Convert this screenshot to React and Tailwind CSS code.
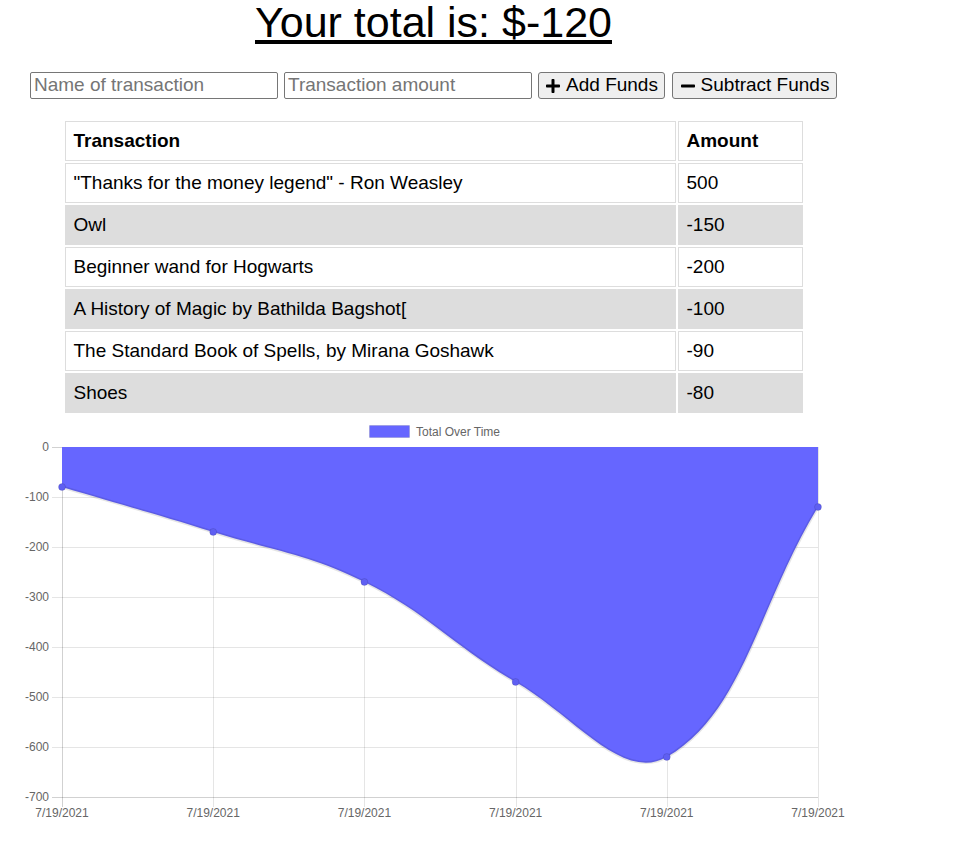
import { FaPlus, FaMinus } from "react-icons/fa";

const rows = [
  { name: '"Thanks for the money legend" - Ron Weasley', value: 500 },
  { name: "Owl", value: -150 },
  { name: "Beginner wand for Hogwarts", value: -200 },
  { name: "A History of Magic by Bathilda Bagshot[", value: -100 },
  { name: "The Standard Book of Spells, by Mirana Goshawk", value: -90 },
  { name: "Shoes", value: -80 },
];

// chart geometry (svg starts right under the table)
const TOP = 32;
const LEFT = 62;
const STEP_X = 151.2;
const PX_PER_UNIT = 0.5;

const toY = (v) => TOP + -v * PX_PER_UNIT;

// running total, oldest first
const totals = [];
{
  let sum = 0;
  [...rows].reverse().forEach((r) => {
    sum += r.value;
    totals.push(sum);
  });
}
const points = totals.map((v, i) => ({ x: LEFT + i * STEP_X, y: toY(v) }));

// same spline chart.js uses (tension 0.4)
const controls = points.map((p, i) => {
  const prev = points[i - 1] || p;
  const next = points[i + 1] || p;
  const d01 = Math.hypot(p.x - prev.x, p.y - prev.y);
  const d12 = Math.hypot(next.x - p.x, next.y - p.y);
  let s01 = d01 / (d01 + d12);
  let s12 = d12 / (d01 + d12);
  if (isNaN(s01)) s01 = 0;
  if (isNaN(s12)) s12 = 0;
  const fa = 0.4 * s01;
  const fb = 0.4 * s12;
  return {
    prev: { x: p.x - fa * (next.x - prev.x), y: p.y - fa * (next.y - prev.y) },
    next: { x: p.x + fb * (next.x - prev.x), y: p.y + fb * (next.y - prev.y) },
  };
});

let curve = `M${points[0].x},${points[0].y}`;
for (let i = 1; i < points.length; i++) {
  const a = controls[i - 1].next;
  const b = controls[i].prev;
  const p = points[i];
  curve += ` C${a.x},${a.y} ${b.x},${b.y} ${p.x},${p.y}`;
}
const last = points[points.length - 1];
const area = `M${LEFT},${TOP} L${points[0].x},${points[0].y} ${curve.slice(1).replace(/^[^C]*/, "")} L${last.x},${TOP} Z`;

const yTicks = [0, -100, -200, -300, -400, -500, -600, -700];

const Chart = () => (
  <svg width="867" height="430" className="block" style={{ fontFamily: '"Liberation Sans", Arial, sans-serif' }}>
    {/* legend */}
    <rect x="369.5" y="10.5" width="40" height="12" fill="#6666ff" stroke="rgba(0,0,0,0.1)" strokeWidth="1" />
    <text x="416" y="20.5" fontSize="12" fill="#666">Total Over Time</text>

    {/* horizontal grid */}
    {yTicks.map((v) => (
      <g key={v}>
        <line x1="52" x2="818" y1={toY(v) + 0.5} y2={toY(v) + 0.5} stroke={v === 0 || v === -700 ? "rgba(0,0,0,0.18)" : "rgba(0,0,0,0.1)"} />
        <text x="49" y={toY(v) + 4} fontSize="12" fill="#666" textAnchor="end">{v}</text>
      </g>
    ))}

    {/* vertical grid */}
    {points.map((p, i) => (
      <g key={i}>
        <line x1={Math.round(p.x) + 0.5} x2={Math.round(p.x) + 0.5} y1={TOP} y2={toY(-700) + 10} stroke={i === 0 ? "rgba(0,0,0,0.18)" : "rgba(0,0,0,0.1)"} />
        <text x={p.x} y={toY(-700) + 20} fontSize="12" fill="#666" textAnchor="middle">7/19/2021</text>
      </g>
    ))}

    {/* area */}
    <path d={area} fill="#6666ff" />
    <path d={curve} fill="none" stroke="rgba(0,0,0,0.1)" strokeWidth="3" />
    {points.map((p, i) => (
      <circle key={i} cx={p.x} cy={p.y} r="3.5" fill="#5f5ff2" stroke="rgba(0,0,0,0.1)" strokeWidth="1" />
    ))}
  </svg>
);

const App = () => {
  return (
    <div className="w-[867px] bg-white text-black" style={{ fontFamily: '"Liberation Sans", Arial, sans-serif' }}>
      <h1 className="text-center text-[43px] leading-[44px] font-normal underline">Your total is: $-120</h1>

      <form className="mt-[28px] flex justify-center gap-[6px]" onSubmit={(e) => e.preventDefault()}>
        <input
          type="text"
          placeholder="Name of transaction"
          className="w-[248px] h-[27px] border border-[#767676] rounded-[2px] px-[3px] text-[19px] placeholder:text-[#757575]"
        />
        <input
          type="text"
          placeholder="Transaction amount"
          className="w-[248px] h-[27px] border border-[#767676] rounded-[2px] px-[3px] text-[19px] placeholder:text-[#757575]"
        />
        <button className="w-[127px] h-[27px] flex items-center justify-center gap-[5px] bg-[#efefef] border border-[#767676] rounded-[3px] text-[19px]">
          <FaPlus className="w-4 h-4 shrink-0" />
          Add Funds
        </button>
        <button className="w-[165px] h-[27px] ml-[1px] flex items-center justify-center gap-[5px] bg-[#efefef] border border-[#767676] rounded-[3px] text-[19px]">
          <FaMinus className="w-4 h-4 shrink-0" />
          Subtract Funds
        </button>
      </form>

      <table className="mt-[20px] mx-auto border-separate border-spacing-[2px] text-[19px] leading-[22px]">
        <thead>
          <tr>
            <th className="w-[611px] border border-[#dddddd] p-2 text-left font-bold">Transaction</th>
            <th className="w-[125px] border border-[#dddddd] p-2 text-left font-bold">Amount</th>
          </tr>
        </thead>
        <tbody>
          {rows.map((r, i) => (
            <tr key={i} className={i % 2 === 1 ? "bg-[#dddddd]" : ""}>
              <td className="border border-[#dddddd] p-2">{r.name}</td>
              <td className="border border-[#dddddd] p-2">{r.value}</td>
            </tr>
          ))}
        </tbody>
      </table>

      <Chart />
    </div>
  );
};

export default App;
